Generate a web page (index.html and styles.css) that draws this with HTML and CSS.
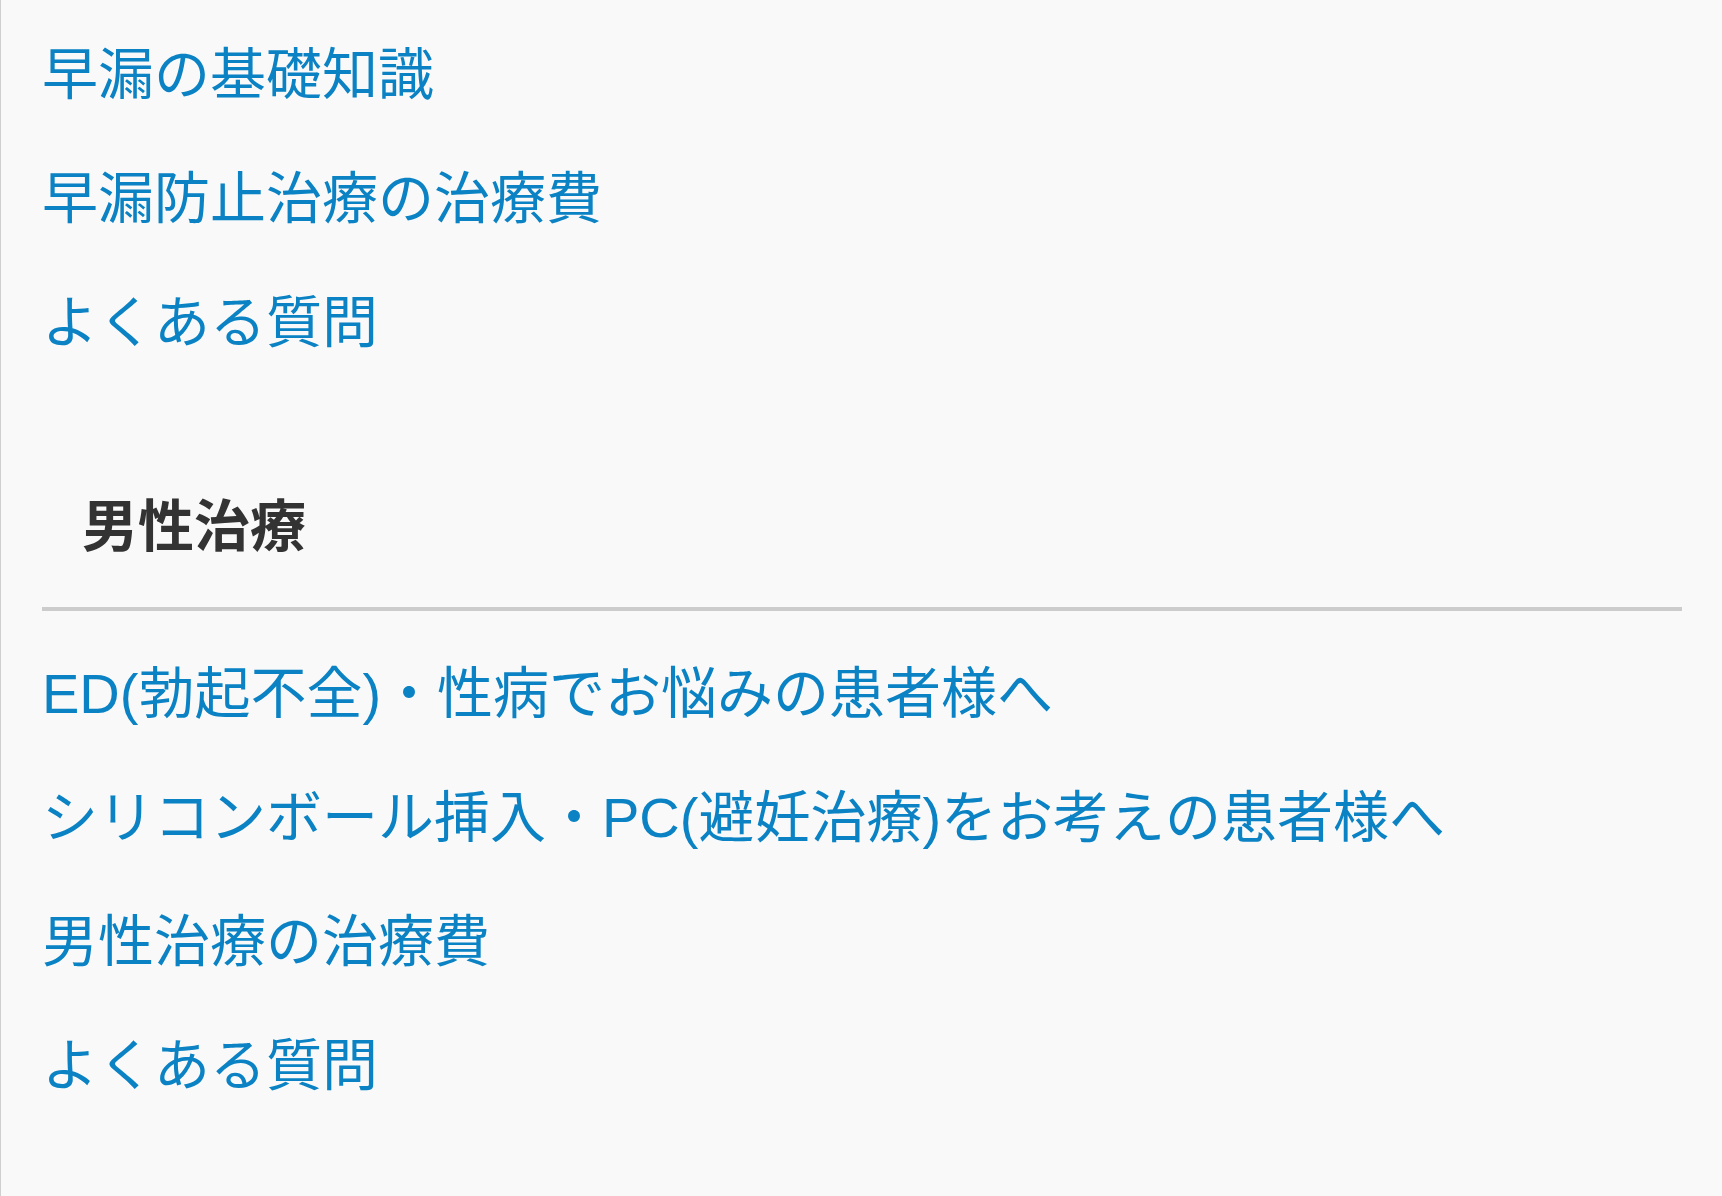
FILE: index.html
```html
<!DOCTYPE html>
<html lang="ja">
<head>
    <meta charset="UTF-8">
    <meta name="viewport" content="width=device-width, initial-scale=1.0">
    <title>メニュー</title>
    <link rel="stylesheet" href="styles.css">
</head>
<body>
    <nav class="side-menu">
        <ul class="menu-list first">
            <li><a href="#">早漏の基礎知識</a></li>
            <li><a href="#">早漏防止治療の治療費</a></li>
            <li><a href="#">よくある質問</a></li>
        </ul>

        <h2 class="menu-title">男性治療</h2>
        <ul class="menu-list">
            <li><a href="#">ED(勃起不全)・性病でお悩みの患者様へ</a></li>
            <li><a href="#">シリコンボール挿入・PC(避妊治療)をお考えの患者様へ</a></li>
            <li><a href="#">男性治療の治療費</a></li>
            <li><a href="#">よくある質問</a></li>
        </ul>
    </nav>
</body>
</html>
```

FILE: styles.css
```css
html, body {
    margin: 0;
    padding: 0;
    background-color: #f9f9f9;
}

body {
    font-family: "Liberation Sans", "Noto Sans CJK JP", sans-serif;
    min-height: 100vh;
}

.side-menu {
    border-left: 1px solid #cfcfcf;
    min-height: 100vh;
    padding: 13px 40px 0 41px;
    box-sizing: border-box;
}

.menu-list {
    list-style: none;
    margin: 0;
    padding: 21px 0 0;
}

.menu-list.first {
    padding-top: 0;
}

.menu-list li {
    padding: 20px 0;
    font-size: 56px;
    line-height: 84px;
}

.menu-list a {
    color: #0a82c3;
    text-decoration: none;
}

.menu-title {
    margin: 100px 0 0;
    padding: 0 40px 38px;
    font-size: 56px;
    line-height: 84px;
    font-weight: bold;
    color: #333;
    border-bottom: 4px solid #cccccc;
}
```
